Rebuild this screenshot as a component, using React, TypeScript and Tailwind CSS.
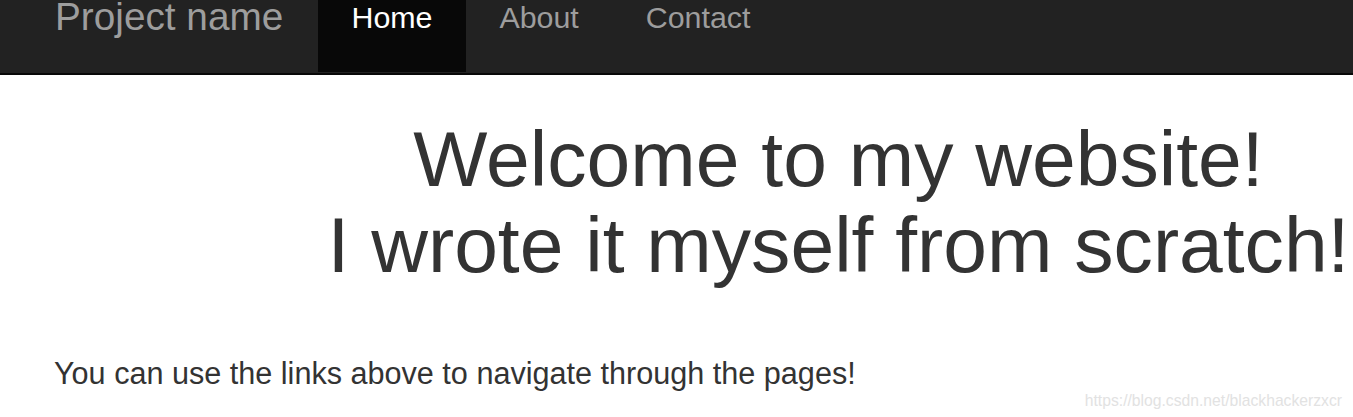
import React from "react";

export default function App() {
  return (
    <div className="relative w-[1353px] h-[417px] overflow-hidden bg-white font-['Liberation_Sans',Arial,sans-serif] text-[#333]">
      <header className="h-[75px] bg-[#222] border-b-2 border-[#080808] flex items-start">
        <a className="block pl-[55px] pr-[34.7px] text-[38.75px] leading-[33px] text-[#9d9d9d] whitespace-nowrap">
          Project name
        </a>
        <nav className="flex items-start">
          <a className="block h-[72px] px-[33.45px] bg-[#080808] text-white text-[30.4px] leading-[35.4px] whitespace-nowrap">
            Home
          </a>
          <a className="block h-[72px] px-[33.45px] text-[#9d9d9d] text-[30.4px] leading-[35.4px] whitespace-nowrap">
            About
          </a>
          <a className="block h-[72px] px-[33.45px] text-[#9d9d9d] text-[30.4px] leading-[35.4px] whitespace-nowrap">
            Contact
          </a>
        </nav>
      </header>
      <main>
        <h1 className="mt-[40.5px] ml-[288px] w-[1101px] text-center whitespace-nowrap text-[78.6px] leading-[86.7px] font-normal">
          Welcome to my website!
          <br />
          I wrote it myself from scratch!
        </h1>
        <p className="mt-[63px] pl-[54px] text-[30.6px] leading-[43.6px] whitespace-nowrap">
          You can use the links above to navigate through the pages!
        </p>
      </main>
      <div className="absolute right-[11px] top-[392.5px] text-[15.7px] leading-[16px] text-[#e2e2e2] whitespace-nowrap">
        https://blog.csdn.net/blackhackerzxcr
      </div>
    </div>
  );
}
